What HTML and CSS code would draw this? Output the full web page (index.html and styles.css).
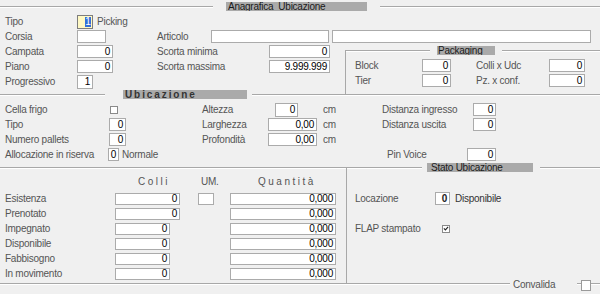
FILE: index.html
```html
<!DOCTYPE html>
<html>
<head>
<meta charset="utf-8">
<link rel="stylesheet" href="styles.css">
</head>
<body>
<div class="form">
  <div class="legend lg-top">
    <span class="rule w213"></span>
    <span class="bar bar-anag">Anagrafica&nbsp; Ubicazione</span>
    <span class="rule fill"></span>
  </div>

  <div class="top">
    <div class="top-left">
      <div class="row"><span class="lbl l72">Tipo</span><span class="inp tipo"><span class="sel">1</span></span><span class="txt ml4">Picking</span></div>
      <div class="row"><span class="lbl l72">Corsia</span><span class="inp w29"></span></div>
      <div class="row"><span class="lbl l72">Campata</span><span class="inp w36">0</span></div>
      <div class="row"><span class="lbl l72">Piano</span><span class="inp w36">0</span></div>
      <div class="row"><span class="lbl l72">Progressivo</span><span class="inp w16 tall">1</span></div>
    </div>
    <div class="top-right">
      <div class="row"><span class="lbl l54">Articolo</span><span class="inp w118"></span><span class="inp w259 ml3"></span></div>
      <div class="split">
        <div class="scorte">
          <div class="row"><span class="lbl l112">Scorta minima</span><span class="inp w61">0</span></div>
          <div class="row"><span class="lbl l112">Scorta massima</span><span class="inp w61">9.999.999</span></div>
        </div>
        <div class="packaging">
          <div class="legend lg-pack">
            <span class="rule w84"></span>
            <span class="bar bar-pack">Packaging</span>
            <span class="rule fill"></span>
          </div>
          <div class="pack-rows">
            <div class="row"><span class="lbl l67">Block</span><span class="inp w29">0</span><span class="lbl l73 ml25">Colli x Udc</span><span class="inp w36">0</span></div>
            <div class="row"><span class="lbl l67">Tier</span><span class="inp w29">0</span><span class="lbl l73 ml25">Pz. x conf.</span><span class="inp w36">0</span></div>
          </div>
        </div>
      </div>
    </div>
  </div>

  <div class="legend lg-ubi">
    <span class="rule w105"></span>
    <span class="bar bar-ubi">Ubicazione</span>
    <span class="rule fill"></span>
  </div>

  <div class="ubi">
    <div class="col c1">
      <div class="row"><span class="lbl l104">Cella frigo</span><span class="chk ml1"></span></div>
      <div class="row"><span class="lbl l104">Tipo</span><span class="inp w17">0</span></div>
      <div class="row"><span class="lbl l104">Numero pallets</span><span class="inp w17">0</span></div>
      <div class="row"><span class="lbl l104">Allocazione in riserva</span><span class="inp w11 mln1">0</span><span class="txt ml3">Normale</span></div>
    </div>
    <div class="col c2">
      <div class="row"><span class="lbl l66">Altezza</span><span class="slot"><span class="inp w23 ml7 tall">0</span></span><span class="unit">cm</span></div>
      <div class="row"><span class="lbl l66">Larghezza</span><span class="slot"><span class="inp w49">0,00</span></span><span class="unit">cm</span></div>
      <div class="row"><span class="lbl l66">Profondità</span><span class="slot"><span class="inp w49">0,00</span></span><span class="unit">cm</span></div>
      <div class="row"></div>
    </div>
    <div class="col c3">
      <div class="row"><span class="lbl l91">Distanza ingresso</span><span class="inp w23">0</span></div>
      <div class="row"><span class="lbl l91">Distanza uscita</span><span class="inp w23">0</span></div>
      <div class="row"></div>
      <div class="row pin"><span class="lbl l80">Pin Voice</span><span class="inp w29">0</span></div>
    </div>
  </div>

  <div class="legend lg-stato">
    <span class="rule w422"></span>
    <span class="bar bar-stato">Stato Ubicazione</span>
    <span class="rule fill"></span>
  </div>

  <div class="bottom">
    <div class="giac">
      <div class="grid">
        <span class="hd"></span>
        <span class="hd hd-colli">Colli</span>
        <span class="hd hd-um">UM.</span>
        <span class="hd hd-qta">Quantità</span>

        <span class="lbl">Esistenza</span><span class="inp w65">0</span><span class="inp w16 um"></span><span class="inp w106">0,000</span>
        <span class="lbl">Prenotato</span><span class="inp w65">0</span><span></span><span class="inp w106">0,000</span>
        <span class="lbl">Impegnato</span><span class="inp w55">0</span><span></span><span class="inp w106">0,000</span>
        <span class="lbl">Disponibile</span><span class="inp w55">0</span><span></span><span class="inp w106">0,000</span>
        <span class="lbl">Fabbisogno</span><span class="inp w55">0</span><span></span><span class="inp w106">0,000</span>
        <span class="lbl">In movimento</span><span class="inp w55">0</span><span></span><span class="inp w106">0,000</span>
      </div>
    </div>
    <div class="stato">
      <div class="row"><span class="lbl l80">Locazione</span><span class="inp w15 strong">0</span><span class="txt ml5 dark">Disponibile</span></div>
      <div class="row"></div>
      <div class="row"><span class="lbl l87">FLAP stampato</span><span class="chk"><svg width="7" height="7" viewBox="0 0 7 7"><path d="M1 3.4 L2.8 5.2 L6 1.6" fill="none" stroke="#222" stroke-width="1.3"/></svg></span></div>
    </div>
  </div>

  <div class="legend footer">
    <span class="rule w510"></span>
    <span class="txt conv">Convalida</span>
    <span class="rule w4"></span>
    <span class="cbox"></span>
    <span class="rule fill"></span>
  </div>
</div>
</body>
</html>
```

FILE: styles.css
```css
html, body {
  margin: 0;
  padding: 0;
}
body {
  background: #f0f0f0;
  width: 600px;
  height: 294px;
  overflow: hidden;
  font-family: "Liberation Sans", Arial, sans-serif;
  font-size: 10px;
  letter-spacing: -0.25px;
  color: #555555;
}
.form {
  width: 600px;
  height: 294px;
}

/* legends / separator lines */
.legend {
  display: flex;
  align-items: flex-start;
  height: 10px;
}
.rule {
  display: block;
  margin-top: 5px;
  height: 0;
  border-top: 1px solid #a8a8a8;
  border-bottom: 1px solid #ffffff;
  flex: none;
}
.rule.fill { flex: 1; }
.w213 { width: 213px; }
.w84 { width: 84px; }
.w105 { width: 105px; }
.w422 { width: 422px; }
.w510 { width: 510px; }
.w4 { width: 4px; }

.bar {
  display: block;
  flex: none;
  height: 9px;
  margin-top: 1px;
  background: #aaaaaa;
  color: #1a1a1a;
  line-height: 9px;
  white-space: nowrap;
  overflow: hidden;
}
.bar-anag { width: 141px; margin-left: 13px; margin-right: 13px; padding-left: 2px; box-sizing: border-box; }
.bar-pack { width: 58px; margin-left: 7px; margin-right: 7px; padding-left: 1px; box-sizing: border-box; }
.bar-ubi {
  width: 124px; margin-left: 18px; margin-right: 5px; padding-left: 2px; box-sizing: border-box;
  font-weight: bold; letter-spacing: 1.9px; color: #333;
}
.bar-stato { width: 106px; margin-left: 5px; margin-right: 7px; padding-left: 4px; box-sizing: border-box; }

.lg-top { margin-top: 1px; }
.lg-ubi { margin-top: -5px; }

/* generic rows */
.row {
  display: flex;
  align-items: center;
  height: 15px;
}
.lbl {
  display: block;
  flex: none;
  white-space: nowrap;
  line-height: 15px;
}
.txt { white-space: nowrap; line-height: 15px; }
.dark { color: #333; }
.inp {
  display: block;
  flex: none;
  box-sizing: border-box;
  height: 13px;
  border: 1px solid #ababab;
  background: #ffffff;
  color: #000;
  text-align: right;
  padding-right: 2px;
  line-height: 11px;
  white-space: nowrap;
  overflow: hidden;
}
.inp.tall { height: 14px; line-height: 12px; }
.strong { font-weight: bold; color: #222; }

.chk {
  display: flex;
  align-items: center;
  justify-content: center;
  flex: none;
  box-sizing: border-box;
  width: 8px;
  height: 8px;
  border: 1px solid #8a8a8a;
  background: #fff;
}
.chk svg { display: block; }

/* widths */
.l54 { width: 54px; }
.l66 { width: 66px; }
.l67 { width: 67px; }
.l72 { width: 72px; }
.l73 { width: 73px; }
.l80 { width: 80px; }
.l87 { width: 87px; }
.l91 { width: 91px; }
.l104 { width: 104px; }
.l112 { width: 112px; }

.w11 { width: 11px; }
.w15 { width: 15px; }
.w16 { width: 16px; }
.w17 { width: 17px; }
.w23 { width: 23px; }
.w29 { width: 29px; }
.w36 { width: 36px; }
.w49 { width: 49px; }
.w55 { width: 55px; }
.w61 { width: 61px; }
.w65 { width: 65px; }
.w106 { width: 106px; }
.w118 { width: 118px; }
.w259 { width: 259px; }

.ml1 { margin-left: 1px; }
.ml3 { margin-left: 3px; }
.ml4 { margin-left: 4px; }
.ml5 { margin-left: 5px; }
.ml7 { margin-left: 7px; }
.ml25 { margin-left: 25px; }
.mln1 { margin-left: -1px; }

/* top section */
.top {
  display: flex;
  height: 83px;
}
.top-left {
  width: 157px;
  box-sizing: border-box;
  padding-left: 5px;
  padding-top: 3px;
}
.top-right {
  flex: 1;
  padding-top: 18px;
}
.tipo {
  width: 16px;
  height: 14px;
  background: #fff9c4;
  border-color: #7d7d7d;
  padding-right: 1px;
  display: flex;
  justify-content: flex-end;
  align-items: center;
}
.sel {
  display: block;
  background: #3470d8;
  color: #fff;
  line-height: 10px;
  height: 10px;
  padding: 0 0.5px;
}
.split {
  display: flex;
  height: 50px;
}
.scorte { width: 188px; }
.packaging {
  flex: 1;
  margin-top: 6px;
  border-left: 1px solid #a8a8a8;
  height: 44px;
}
.lg-pack { margin-top: -5px; }
.pack-rows {
  padding-left: 9px;
  padding-top: 3px;
}

/* ubicazione section */
.ubi {
  display: flex;
  height: 63px;
  box-sizing: border-box;
  padding-top: 3px;
}
.c1 { width: 202px; box-sizing: border-box; padding-left: 5px; }
.c2 { width: 180px; }
.c3 { flex: 1; }
.slot { display: flex; width: 49px; flex: none; }
.unit { margin-left: 6px; line-height: 15px; }
.pin { padding-left: 5px; }

/* bottom section */
.bottom {
  display: flex;
  height: 111px;
}
.giac {
  width: 347px;
  box-sizing: border-box;
  margin-top: -5px;
  padding-top: 5px;
  padding-left: 5px;
  height: 116px;
  border-right: 1px solid #a8a8a8;
}
.grid {
  display: grid;
  grid-template-columns: 110px 83px 32px 106px;
  grid-template-rows: 19px repeat(6, 15px);
  align-items: center;
}
.grid .inp { height: 12px; line-height: 10px; }
.grid .lbl { line-height: 15px; }
.hd {
  align-self: start;
  padding-top: 4px;
  line-height: 12px;
  white-space: nowrap;
}
.hd-colli { padding-left: 23px; letter-spacing: 2.5px; }
.hd-um { padding-left: 3px; }
.hd-qta { padding-left: 28px; letter-spacing: 2.5px; }
.um { height: 12px; }

.stato {
  flex: 1;
  padding-left: 8px;
  padding-top: 19px;
}

/* footer */
.footer {
  margin-top: -6px;
  height: 14px;
}
.footer .rule { margin-top: 6px; }
.conv {
  display: block;
  flex: none;
  width: 64px;
  margin-left: 3px;
  line-height: 14px;
  padding-top: 1px;
}
.cbox {
  display: block;
  flex: none;
  box-sizing: border-box;
  width: 10px;
  height: 11px;
  margin-top: 3px;
  border: 1px solid #9a9a9a;
  background: #fff;
}
```
